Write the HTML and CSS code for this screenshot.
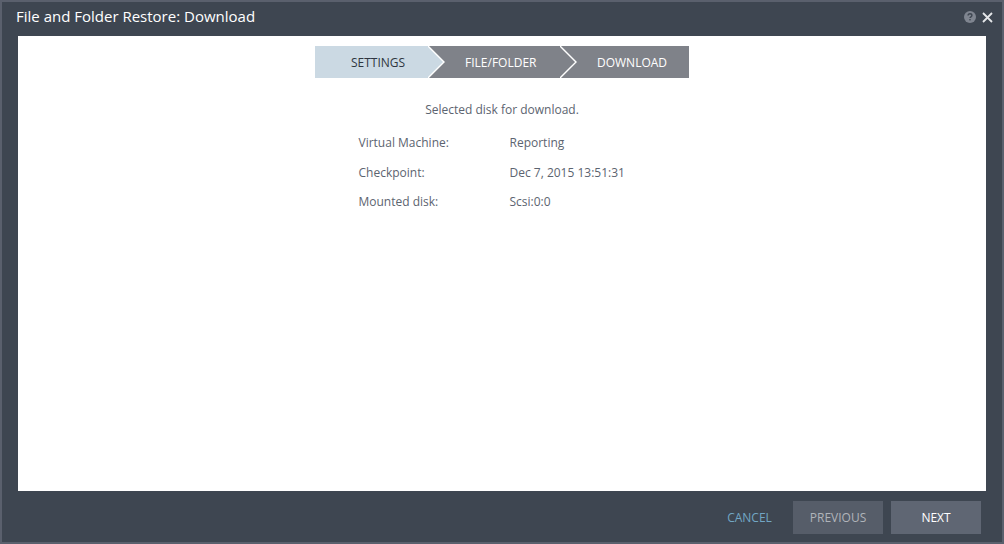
FILE: index.html
```html
<!DOCTYPE html>
<html lang="en">
<head>
<meta charset="utf-8">
<title>File and Folder Restore: Download</title>
<link rel="stylesheet" href="styles.css">
</head>
<body>
<div class="dialog">
  <header class="titlebar">
    <h1 class="title">File and Folder Restore: Download</h1>
    <div class="tools">
      <svg class="help" width="12" height="12" viewBox="0 0 12 12"><circle cx="6" cy="6" r="6" fill="#7f8590"/><path d="M4.1 4.6c0-1.2.9-1.8 1.9-1.8s1.9.6 1.9 1.6c0 1.4-1.9 1.4-1.9 2.7" fill="none" stroke="#3e4651" stroke-width="1.4"/><rect x="5.3" y="8" width="1.4" height="1.4" fill="#3e4651"/></svg>
      <svg class="close" width="11" height="11" viewBox="0 0 11 11"><path d="M1 1l9 9M10 1l-9 9" stroke="#e4e6e9" stroke-width="1.8" fill="none"/></svg>
    </div>
  </header>
  <main class="content">
    <ol class="stepper">
      <li class="step step-active">SETTINGS
        <svg class="chevron" width="17" height="32" viewBox="0 0 17 32"><path d="M0 0L16 16L0 32Z" fill="#cbd9e3"/><path d="M0 0L16 16L0 32" fill="none" stroke="#fff" stroke-width="1.4"/></svg>
      </li>
      <li class="step step-mid">FILE/FOLDER
        <svg class="chevron" width="17" height="32" viewBox="0 0 17 32"><path d="M0 0L16 16L0 32" fill="none" stroke="#fff" stroke-width="1.4"/></svg>
      </li>
      <li class="step step-last">DOWNLOAD</li>
    </ol>
    <p class="intro">Selected disk for download.</p>
    <dl class="details">
      <dt>Virtual Machine:</dt><dd>Reporting</dd>
      <dt>Checkpoint:</dt><dd>Dec 7, 2015 13:51:31</dd>
      <dt>Mounted disk:</dt><dd>Scsi:0:0</dd>
    </dl>
  </main>
  <footer class="footer">
    <button class="btn btn-link">CANCEL</button>
    <button class="btn btn-disabled">PREVIOUS</button>
    <button class="btn btn-primary">NEXT</button>
  </footer>
</div>
</body>
</html>
```
FILE: styles.css
```css
* { box-sizing: border-box; }
html, body { margin: 0; padding: 0; height: 100%; }
body { font-family: "Open Sans", "Liberation Sans", sans-serif; background: #3e4651; }
.dialog {
  width: 1004px; height: 544px;
  display: flex; flex-direction: column;
  background: #3e4651;
  border: 2px solid #5a606d;
}
.titlebar {
  height: 34px; flex: none;
  display: flex; align-items: center; justify-content: space-between;
  padding: 0 9px 5px 14px;
}
.title { margin: 0 0 2px; font-size: 15px; font-weight: 400; color: #fff; line-height: 20px; }
.tools { display: flex; align-items: center; gap: 6px; padding-top: 1px; }
.help, .close { display: block; }
.content {
  flex: none; height: 455px;
  margin: 0 16px;
  background: #fff;
  padding-top: 10px;
  display: flex; flex-direction: column; align-items: center;
}
.stepper { list-style: none; margin: 0; padding: 0; display: flex; height: 32px; width: 374px; }
.step {
  position: relative;
  display: flex; align-items: center;
  font-size: 12px; height: 32px;
  background: #7f8289; color: #fff;
}
.step-active { width: 113px; background: #cbd9e3; color: #2f3640; padding-left: 36px; }
.step-mid { width: 132px; padding-left: 37px; }
.step-last { width: 129px; padding-left: 37px; }
.chevron { position: absolute; left: 100%; top: 0; z-index: 1; }
.intro { margin: 24px 0 0; font-size: 12px; line-height: 16px; color: #5c6470; }
.details {
  margin: 17px 0 0; width: 287px;
  display: grid; grid-template-columns: 151px 1fr; row-gap: 13.5px;
  font-size: 12px; line-height: 16px; color: #5c6470;
}
.details dt, .details dd { margin: 0; }
.footer {
  flex: 1;
  display: flex; align-items: flex-start; justify-content: flex-end;
  gap: 8px; padding: 10px 21px 0 0;
}
.btn {
  height: 33px; width: 90px; border: 0; padding: 0;
  font-family: inherit; font-size: 12px;
}
.btn-link { background: none; color: #72a6c4; width: 90px; margin-right: -6px; padding-left: 7px; }
.btn-disabled { background: #565d69; color: #b0b4ba; }
.btn-primary { background: #5f6673; color: #fff; }
```
